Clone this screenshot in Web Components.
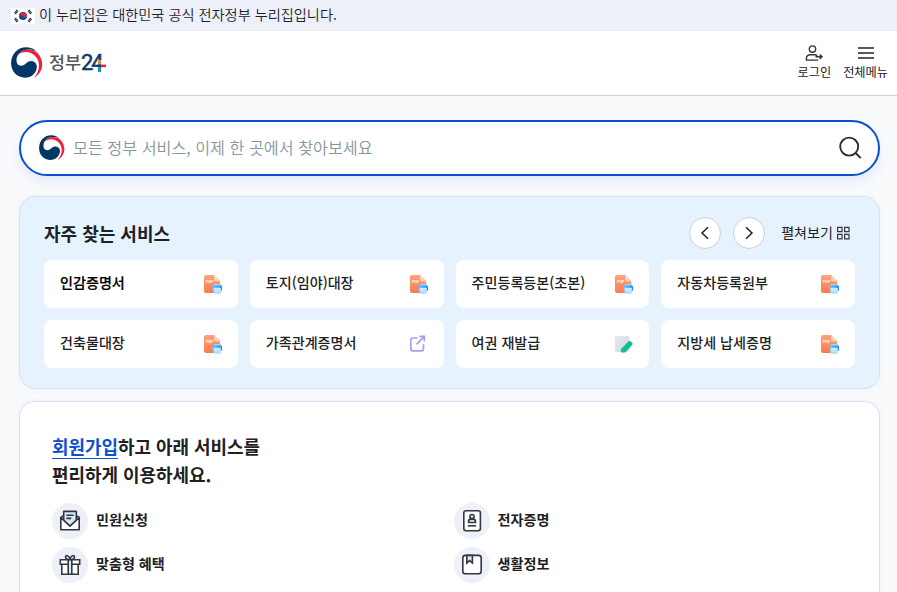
<!DOCTYPE html>
<html lang="ko">
<head>
<meta charset="utf-8">
<title>정부24</title>
<style>
    body {
        margin: 0;
        height: 592px;
        overflow: hidden;
        background: #f9fafc;
        color: #1e2124;
        font-family: "Noto Sans CJK KR", sans-serif;
    }
    main {
        display: flex;
        flex-direction: column;
        padding: 24px 17px 0 19px;
    }
</style>
</head>
<body>
<gov-banner>이 누리집은 대한민국 공식 전자정부 누리집입니다.</gov-banner>
<gov-header></gov-header>
<main>
    <gov-search>모든 정부 서비스, 이제 한 곳에서 찾아보세요</gov-search>
    <gov-frequent>
        <span slot="title">자주 찾는 서비스</span>
        <gov-card icon="pdf" active>인감증명서</gov-card>
        <gov-card icon="pdf">토지(임야)대장</gov-card>
        <gov-card icon="pdf">주민등록등본(초본)</gov-card>
        <gov-card icon="pdf">자동차등록원부</gov-card>
        <gov-card icon="pdf">건축물대장</gov-card>
        <gov-card icon="link">가족관계증명서</gov-card>
        <gov-card icon="edit">여권 재발급</gov-card>
        <gov-card icon="pdf">지방세 납세증명</gov-card>
    </gov-frequent>
    <gov-join>
        <gov-item icon="mail">민원신청</gov-item>
        <gov-item icon="idcard">전자증명</gov-item>
        <gov-item icon="gift">맞춤형 혜택</gov-item>
        <gov-item icon="book">생활정보</gov-item>
    </gov-join>
</main>

<script>
const icons = {
    flag: `<svg width="24" height="16" viewBox="0 0 24 16">
        <rect width="24" height="16" fill="#fff"/>
        <circle cx="12" cy="8" r="4" fill="#0f4c9c"/>
        <path d="M8.1 8.2A4 4 0 0 1 16 8.2C15 10 13 9.6 12 8.3S9 6.8 8.1 8.2z" fill="#e0283c"/>
        <g stroke="#222" stroke-width="2.6" stroke-dasharray="1.1 .4">
            <path d="M4 5.6l2.5-3.2M17.5 2.4L20 5.6M4 10.4l2.5 3.2M17.5 13.6l2.5-3.2"/>
        </g>
    </svg>`,
    emblem: `<svg viewBox="0 0 32 32">
        <path fill="#003764" d="M25 4C20-.8 10-1.2 4.5 4.7-1.4 11-1.2 21 4 26.6 8 31 16 32 20.5 29c4.5-3 5.7-7.6 5.2-10.5-1-4.7-6.9-6-10.5-2.2-3.1 3.4-8.2 3.2-9.4-.8C4.5 10 8 5 13 3.2 17 1.9 21.5 2.2 25 4z"/>
        <path fill="#f0203c" d="M6.4 8.2C10.5 1.7 21 .5 26.5 6c7 7 6.5 19-3.5 24.8C29.2 23.5 29.3 15 25 10 20 4 12 3.6 6.4 8.2z"/>
    </svg>`,
    login: `<svg width="20" height="20" viewBox="0 0 20 20" fill="none" stroke="#33363d" stroke-width="1.4">
        <circle cx="8.5" cy="6.1" r="3.2"/>
        <path d="M14.2 17.1H2.4v-1.5c0-2.5 1.8-3.9 4-3.9h4.2c1 0 1.9.4 2.6 1M11.5 13.8h6.4M15.7 11.5l2.4 2.3-2.4 2.3"/>
    </svg>`,
    menu: `<svg width="20" height="20" viewBox="0 0 20 20" stroke="#555960" stroke-width="1.8">
        <path d="M2 5h16M2 10h16M2 15h16"/>
    </svg>`,
    search: `<svg width="24" height="24" viewBox="0 0 24 24" fill="none" stroke="#2a2d31" stroke-width="1.9">
        <circle cx="10.2" cy="10.6" r="9"/><path d="M16.6 17l5.2 5.2"/>
    </svg>`,
    prev: `<svg width="16" height="16" viewBox="0 0 16 16" fill="none" stroke="#1e2124" stroke-width="1.5"><path d="M11 2.3L5 8l6 5.7"/></svg>`,
    next: `<svg width="16" height="16" viewBox="0 0 16 16" fill="none" stroke="#1e2124" stroke-width="1.5"><path d="M5 2.3L11 8l-6 5.7"/></svg>`,
    grid: `<svg width="14" height="14" viewBox="0 0 14 14" fill="none" stroke="#33363d" stroke-width="1.2">
        <path d="M1.6 1.3H6v4.4H1.6zM8.6 1.3H13v4.4H8.6zM1.6 8.4H6v4.4H1.6zM8.6 8.4H13v4.4H8.6z"/>
    </svg>`,
    pdf: `<svg width="20" height="20" viewBox="0 0 20 20">
        <defs>
            <linearGradient id="a" x1="0" y1="0" x2="0" y2="1"><stop stop-color="#ffa27a"/><stop offset="1" stop-color="#fa7b4b"/></linearGradient>
            <linearGradient id="b" x1="0" y1="0" x2="1" y2="0"><stop stop-color="#6bc2ff"/><stop offset="1" stop-color="#1c8bf5"/></linearGradient>
            <linearGradient id="c" x1="0" y1="0" x2="0" y2="1"><stop stop-color="#d4efff"/><stop offset="1" stop-color="#a2dafd"/></linearGradient>
        </defs>
        <path fill="url(#a)" d="M3 1h7.7L17 7v12H3a2 2 0 0 1-2-2V3a2 2 0 0 1 2-2z"/>
        <path fill="#ffcfb8" d="M11 1l6 6.6h-4.6A1.4 1.4 0 0 1 11 6.2z"/>
        <text x="3" y="8.7" font-size="3.6" font-weight="700" font-family="Liberation Sans, sans-serif" fill="#fff">PDF</text>
        <path fill="#9cd5fb" d="M11 10h7v3h-7z"/>
        <rect x="9.2" y="11.5" width="9.8" height="5.5" rx="1" fill="url(#b)"/>
        <rect x="10.6" y="13.8" width="7.2" height="6" rx=".7" fill="url(#c)"/>
    </svg>`,
    link: `<svg width="20" height="20" viewBox="0 0 20 20" fill="none" stroke="#aa9cf2" stroke-width="1.7">
        <path d="M8.5 4H3.8a2 2 0 0 0-2 2v8.8a2 2 0 0 0 2 2h8.7a2 2 0 0 0 2-2v-4.6M10.3 2.4h5v5M15 2.7l-7.5 7.7"/>
    </svg>`,
    edit: `<svg width="20" height="20" viewBox="0 0 20 20">
        <defs><linearGradient id="a" x1="0" y1="0" x2="1" y2="1"><stop stop-color="#e3eaf3"/><stop offset="1" stop-color="#cfd8e6"/></linearGradient></defs>
        <rect x="1" y="2" width="14.5" height="16" rx="2" fill="url(#a)"/>
        <path fill="#11bd91" d="M7 15L14.7 7.3q.9-.8 1.8 0L18.3 9q.9 1 0 1.8L11 18.6H7.5q-.6 0-.6-.6z"/>
    </svg>`,
    mail: `<svg width="24" height="24" viewBox="0 0 24 24" fill="none" stroke="#33363d" stroke-width="1.6" stroke-linejoin="round">
        <path fill="#fff" d="M2.8 8.5v12.2h18.4V8.5L12 17z"/>
        <path fill="#d3e8f9" d="M5.7 11.2V2.4h12.6v8.8L12 17z"/>
        <path d="M5.6 6.8L2.8 8.5M18.4 6.8l2.8 1.7M8.4 6.2h7.2M8.4 9.4h4.8"/>
    </svg>`,
    idcard: `<svg width="24" height="24" viewBox="0 0 24 24" fill="none" stroke="#33363d" stroke-width="1.6">
        <rect x="3.8" y="1.8" width="16.6" height="20" rx="2.2" fill="#fff"/>
        <circle cx="12" cy="7.6" r="2.1" fill="#d3e8f9"/>
        <path fill="#d3e8f9" d="M8.5 13.5v-1c0-1.5 1.2-2.4 2.3-2.4h2.4c1.1 0 2.3.9 2.3 2.4v1z"/>
        <path d="M7.8 16.8h8.4"/>
    </svg>`,
    gift: `<svg width="24" height="24" viewBox="0 0 24 24" fill="none" stroke="#33363d" stroke-width="1.6">
        <path fill="#fff" d="M3.8 11h16.4v10.2H3.8z"/>
        <path fill="#fff" d="M2.3 6.8h19.4v4.4H2.3z"/>
        <path fill="#d3e8f9" d="M10.2 6.8h3.6v14.4h-3.6z"/>
        <path d="M12 6.5C9.5 6.7 7.2 5.5 7.5 3.7 8 1.6 11.4 2.7 12 6.5c.6-3.8 4-4.9 4.5-2.8.3 1.8-2 3-4.5 2.8z"/>
    </svg>`,
    book: `<svg width="24" height="24" viewBox="0 0 24 24" fill="none" stroke="#33363d" stroke-width="1.6">
        <rect x="2.8" y="2.4" width="18.4" height="18.4" rx="2.6" fill="#fff"/>
        <path fill="#d3e8f9" d="M6.8 2.4h5.6v7.6L9.6 7.6 6.8 10z"/>
    </svg>`
};

// shared base: every element renders its markup into an open shadow root
class GovElement extends HTMLElement {
    constructor() {
        super();
        this.attachShadow({mode: 'open'});
    }
    connectedCallback() {
        this.shadowRoot.innerHTML = `<style>svg { display: block; flex: none; }</style>` + this.render();
    }
}

class GovBanner extends GovElement {
    render() {
        return `
            <style>
                :host {
                    display: flex;
                    align-items: center;
                    gap: 4px;
                    height: 31px;
                    padding-left: 11px;
                    box-sizing: border-box;
                    background: #edf0f8;
                    font-size: 14.2px;
                    line-height: 26px;
                    font-weight: 350;
                }
                span {
                    margin-bottom: 3px;
                }
            </style>
            ${icons.flag}<span><slot></slot></span>
        `;
    }
}

class GovHeader extends GovElement {
    render() {
        return `
            <style>
                :host {
                    display: flex;
                    justify-content: space-between;
                    height: 65px;
                    box-sizing: border-box;
                    padding: 0 9px 0 11px;
                    background: #fff;
                    border-bottom: 1px solid #cdd1d5;
                }
                .logo {
                    display: flex;
                    align-items: center;
                    gap: 6px;
                }
                .logo > svg {
                    width: 32px;
                    height: 32px;
                }
                .name {
                    display: flex;
                    align-items: center;
                    color: #55565a;
                    font-size: 17.4px;
                    line-height: 24px;
                    font-weight: 500;
                }
                .name span:first-child {
                    margin-bottom: 2px;
                }
                .num {
                    color: #0e3b6a;
                    font: 400 22px/24px Roboto, sans-serif;
                    letter-spacing: -2px;
                    -webkit-text-stroke: .5px #0e3b6a;
                }
                .plus {
                    margin: 6px 0 0 -8px;
                }
                nav {
                    display: flex;
                    gap: 12px;
                    padding-top: 12px;
                }
                .btn {
                    display: flex;
                    flex-direction: column;
                    align-items: center;
                    font-size: 12.2px;
                    line-height: 18px;
                }
            </style>
            <div class="logo">
                ${icons.emblem}
                <div class="name"><span>정부</span><span class="num">24</span>
                    <svg class="plus" width="12" height="12" viewBox="0 0 12 12">
                        <path fill="#fff" d="M7 0h5v12H3.6V7.4H7z"/>
                        <path fill="#f08a2c" d="M4 0h3v4.6H4z"/>
                        <path fill="#e9203f" d="M7 4.6h5v2.6H7z"/>
                        <path fill="#0e3b6a" d="M3.4 4.6H7v2.6H3.4z"/>
                        <path fill="#1b8fd6" d="M4 7.2h3V12H4z"/>
                    </svg>
                </div>
            </div>
            <nav>
                <div class="btn">${icons.login}<span>로그인</span></div>
                <div class="btn">${icons.menu}<span>전체메뉴</span></div>
            </nav>
        `;
    }
}

class GovSearch extends GovElement {
    render() {
        return `
            <style>
                :host {
                    display: flex;
                    align-items: center;
                    height: 56px;
                    box-sizing: border-box;
                    padding: 0 15px 0 17px;
                    border: 2px solid #0b50d0;
                    border-radius: 28px;
                    background: #fff;
                    box-shadow: 0 6px 12px rgba(11, 80, 208, .09);
                    color: #8a949e;
                    font-size: 16.2px;
                    line-height: 24px;
                    font-weight: 350;
                }
                svg:first-of-type {
                    width: 26px;
                    height: 26px;
                    margin-left: 1px;
                }
                span {
                    flex: 1;
                    margin: 0 0 3px 8px;
                }
            </style>
            ${icons.emblem}<span><slot></slot></span>${icons.search}
        `;
    }
}

class GovFrequent extends GovElement {
    render() {
        return `
            <style>
                :host {
                    display: block;
                    height: 193px;
                    box-sizing: border-box;
                    margin-top: 20px;
                    padding: 20px 24px 0;
                    border: 1px solid #d6e0fb;
                    border-radius: 16px;
                    background: #e6f3fe;
                    box-shadow: 0 0 8px rgba(0, 0, 0, .04);
                }
                .top {
                    display: flex;
                    align-items: center;
                    gap: 12px;
                    height: 32px;
                    padding-right: 5px;
                }
                .title {
                    flex: 1;
                    font-size: 18px;
                    line-height: 32px;
                    font-weight: 700;
                }
                .arrow {
                    display: flex;
                    align-items: center;
                    justify-content: center;
                    width: 32px;
                    height: 32px;
                    box-sizing: border-box;
                    border: 1px solid #cdd1d5;
                    border-radius: 50%;
                    background: #fff;
                }
                .more {
                    display: flex;
                    align-items: center;
                    gap: 3px;
                    margin-left: 4px;
                    font-size: 14.1px;
                    line-height: 28px;
                }
                .more span {
                    margin-bottom: 2px;
                }
                .cards {
                    display: grid;
                    grid-template-columns: repeat(4, 1fr);
                    gap: 12px;
                    margin-top: 11px;
                }
            </style>
            <div class="top">
                <div class="title"><slot name="title"></slot></div>
                <div class="arrow">${icons.prev}</div>
                <div class="arrow">${icons.next}</div>
                <div class="more"><span>펼쳐보기</span>${icons.grid}</div>
            </div>
            <div class="cards"><slot></slot></div>
        `;
    }
}

class GovCard extends GovElement {
    render() {
        return `
            <style>
                :host {
                    display: flex;
                    align-items: center;
                    justify-content: space-between;
                    height: 48px;
                    box-sizing: border-box;
                    padding: 0 15px 0 16px;
                    border-radius: 8px;
                    background: #fff;
                    font-size: 14.1px;
                    line-height: 24px;
                    font-weight: 500;
                }
                :host([active]) {
                    color: #000;
                    -webkit-text-stroke: .2px #000;
                }
                span {
                    margin-bottom: 5px;
                }
            </style>
            <span><slot></slot></span>${icons[this.getAttribute('icon')]}
        `;
    }
}

class GovJoin extends GovElement {
    render() {
        return `
            <style>
                :host {
                    display: block;
                    height: 191px;
                    box-sizing: border-box;
                    margin-top: 12px;
                    padding: 30px 24px 0 32px;
                    border: 1px solid #d6e0fb;
                    border-bottom: 0;
                    border-radius: 16px 16px 0 0;
                    background: #fff;
                    box-shadow: 0 0 8px rgba(0, 0, 0, .04);
                }
                .head {
                    font-size: 17.95px;
                    line-height: 28px;
                    font-weight: 700;
                }
                .head a {
                    display: inline-block;
                    line-height: 24px;
                    color: #0b50d0;
                    border-bottom: 1px solid #0b50d0;
                }
                .list {
                    display: grid;
                    grid-template-columns: 1fr 1fr;
                    gap: 8px 0;
                    margin-top: 15px;
                }
            </style>
            <div class="head"><a>회원가입</a>하고 아래 서비스를<br>편리하게 이용하세요.</div>
            <div class="list"><slot></slot></div>
        `;
    }
}

class GovItem extends GovElement {
    render() {
        return `
            <style>
                :host {
                    display: flex;
                    align-items: center;
                    gap: 8px;
                    font-size: 14.1px;
                    line-height: 24px;
                    font-weight: 700;
                }
                .ico {
                    display: flex;
                    align-items: center;
                    justify-content: center;
                    width: 36px;
                    height: 36px;
                    border-radius: 50%;
                    background: #edf0f8;
                }
                span {
                    margin-bottom: 5px;
                }
            </style>
            <div class="ico">${icons[this.getAttribute('icon')]}</div><span><slot></slot></span>
        `;
    }
}

customElements.define('gov-banner', GovBanner);
customElements.define('gov-header', GovHeader);
customElements.define('gov-search', GovSearch);
customElements.define('gov-frequent', GovFrequent);
customElements.define('gov-card', GovCard);
customElements.define('gov-join', GovJoin);
customElements.define('gov-item', GovItem);
</script>
</body>
</html>
